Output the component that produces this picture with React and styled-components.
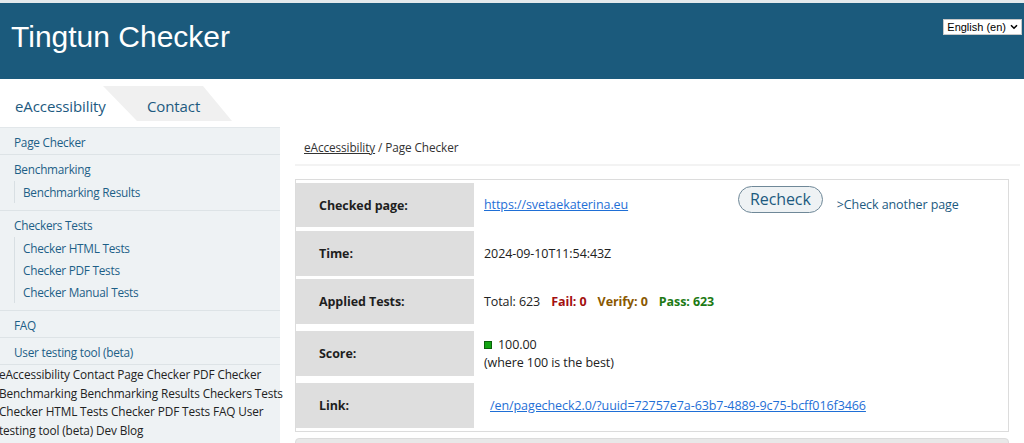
import React from "react";
import styled, { createGlobalStyle } from "styled-components";

const GlobalStyle = createGlobalStyle`
  body {
    margin: 0;
    background: #ffffff;
    font-family: "Open Sans", "Noto Sans", Arial, sans-serif;
    font-size: 12.5px;
    letter-spacing: -0.08px;
    color: #222222;
  }
`;

const Header = styled.header`
  display: flex;
  justify-content: space-between;
  align-items: flex-start;
  height: 76px;
  padding: 0 2px 0 11px;
  background: #1b5a7c;
  border-top: 3px solid #e3e9ec;
  letter-spacing: 0;
`;

const Title = styled.h1`
  margin: 19px 0 0;
  font: 400 30px/30px "Liberation Sans", Arial, sans-serif;
  color: #ffffff;
`;

const LangSelect = styled.div`
  display: inline-flex;
  align-items: center;
  gap: 4px;
  height: 16px;
  box-sizing: border-box;
  margin-top: 16px;
  padding: 0 3px;
  background: #ffffff;
  border: 1px solid #c8c8c8;
  font: 11px/14px "Liberation Sans", Arial, sans-serif;
  white-space: nowrap;
  color: #000000;
`;

const Tabs = styled.nav`
  display: flex;
  height: 35px;
  margin-top: 7px;
`;

const Tab = styled.a`
  display: flex;
  align-items: center;
  padding-top: 5px;
  box-sizing: border-box;
  font-size: 15px;
  letter-spacing: -0.1px;
  color: #1d5a7f;
  text-decoration: none;
  width: ${(p) => (p.$active ? "103px" : "129px")};
  padding-left: ${(p) => (p.$active ? "15px" : "44px")};
  background: ${(p) => (p.$active ? "#ffffff" : "#f0f0f0")};
  clip-path: ${(p) =>
    p.$active ? "none" : "polygon(0 0, 100px 0, 129px 100%, 34px 100%)"};
`;

const Columns = styled.div`
  display: grid;
  grid-template-columns: 280px 1fr;
  margin-top: 6px;
`;

const Sidebar = styled.aside`
  background: #eef2f4;
  border-top: 1px solid #e2e7ea;
  font-size: 11.8px;
  letter-spacing: -0.25px;
`;

const Group = styled.div`
  padding-bottom: ${(p) => (p.$nested ? "7px" : "0")};
  border-bottom: 1px solid #dde3e6;
`;

const NavLink = styled.a`
  display: block;
  padding: 5px 14px 3px;
  line-height: 18px;
  color: #1d5f87;
  text-decoration: none;
`;

const SubList = styled.div`
  margin-left: 14px;
  padding-left: 8px;
  border-left: 1px solid #d8dfe3;
`;

const SubLink = styled.a`
  display: block;
  padding: 2px 0;
  line-height: 18px;
  color: #1d5f87;
  text-decoration: none;
`;

const Flat = styled.p`
  margin: 0 -4px 0 -1px;
  line-height: 18.5px;
  letter-spacing: -0.12px;
  color: #222222;
`;

const Main = styled.main`
  padding: 0 4px 0 15px;
`;

const Crumbs = styled.div`
  margin-top: 11px;
  padding: 0 9px 8px;
  line-height: 18px;
  font-size: 11.8px;
  letter-spacing: -0.1px;
  color: #333333;
  border-bottom: 2px solid #f3f3f3;
`;

const CrumbLink = styled.a`
  color: #333333;
  text-decoration: underline;
`;

const Box = styled.section`
  margin: 13px 11px 0 0;
  padding: 3px 0;
  border: 1px solid #dcdcdc;
  background: #ffffff;
`;

const Row = styled.div`
  display: grid;
  grid-template-columns: 178px 1fr;
  height: ${(p) => p.$h}px;
  margin-top: ${(p) => p.$gap}px;
  &:first-child {
    margin-top: 0;
  }
`;

const Label = styled.div`
  display: flex;
  align-items: center;
  padding-left: 23px;
  background: #dedede;
  font-weight: 700;
  color: #1e1e1e;
`;

const Value = styled.div`
  display: flex;
  align-items: ${(p) => (p.$top ? "flex-start" : "center")};
  padding-left: ${(p) => p.$indent || 10}px;
  line-height: 18px;
  color: #222222;
`;

const UrlLink = styled.a`
  flex: ${(p) => (p.$fixed ? "0 0 254px" : "none")};
  align-self: center;
  color: #1f6fd6;
  text-decoration: underline;
`;

const RecheckButton = styled.button`
  margin-top: 3px;
  height: 27px;
  padding: 0 11px;
  border: 1px solid #6f8898;
  border-radius: 14px;
  background: #eef2f4;
  font-family: "Open Sans", "Noto Sans", Arial, sans-serif;
  font-size: 16px;
  letter-spacing: -0.1px;
  line-height: 25px;
  color: #1d5a7f;
`;

const AnotherLink = styled.a`
  margin-left: 14px;
  align-self: center;
  color: #1d5a7f;
  text-decoration: none;
`;

const Stat = styled.span`
  margin-right: 11px;
  font-weight: ${(p) => (p.$color ? 700 : 400)};
  color: ${(p) => p.$color || "#222222"};
`;

const ScoreLines = styled.div`
  display: flex;
  flex-direction: column;
`;

const ScoreLine = styled.div`
  display: flex;
  align-items: center;
  gap: 6px;
`;

const ScoreSquare = styled.span`
  width: 8px;
  height: 8px;
  background: #12a412;
  border: 1px solid #0a600a;
  box-sizing: border-box;
`;

const NextBox = styled.section`
  height: 20px;
  margin: 6px 11px 0 0;
  border: 1px solid #dcdcdc;
  border-radius: 4px 4px 0 0;
  background: #e8e8e8;
`;

const Chevron = () => (
  <svg width="8" height="6" viewBox="0 0 8 6" aria-hidden="true">
    <path d="M1 1.2l3 3 3-3" fill="none" stroke="#000" strokeWidth="1.6" />
  </svg>
);

const App = () => {
  return (
    <>
      <GlobalStyle />
      <Header>
        <Title>Tingtun Checker</Title>
        <LangSelect>
          English (en)
          <Chevron />
        </LangSelect>
      </Header>

      <Tabs>
        <Tab $active href="#">eAccessibility</Tab>
        <Tab href="#">Contact</Tab>
      </Tabs>

      <Columns>
        <Sidebar>
          <Group>
            <NavLink href="#">Page Checker</NavLink>
          </Group>
          <Group $nested>
            <NavLink href="#">Benchmarking</NavLink>
            <SubList>
              <SubLink href="#">Benchmarking Results</SubLink>
            </SubList>
          </Group>
          <Group $nested>
            <NavLink href="#">Checkers Tests</NavLink>
            <SubList>
              <SubLink href="#">Checker HTML Tests</SubLink>
              <SubLink href="#">Checker PDF Tests</SubLink>
              <SubLink href="#">Checker Manual Tests</SubLink>
            </SubList>
          </Group>
          <Group>
            <NavLink href="#">FAQ</NavLink>
          </Group>
          <Group>
            <NavLink href="#">User testing tool (beta)</NavLink>
          </Group>
          <Flat>
            eAccessibility Contact Page Checker PDF Checker Benchmarking
            Benchmarking Results Checkers Tests Checker HTML Tests Checker PDF
            Tests FAQ User testing tool (beta) Dev Blog
          </Flat>
        </Sidebar>

        <Main>
          <Crumbs>
            <CrumbLink href="#">eAccessibility</CrumbLink> / Page Checker
          </Crumbs>

          <Box>
            <Row $h={44} $gap={0}>
              <Label>Checked page:</Label>
              <Value $top>
                <UrlLink $fixed href="#">https://svetaekaterina.eu</UrlLink>
                <RecheckButton>Recheck</RecheckButton>
                <AnotherLink href="#">&gt;Check another page</AnotherLink>
              </Value>
            </Row>
            <Row $h={45} $gap={4}>
              <Label>Time:</Label>
              <Value>2024-09-10T11:54:43Z</Value>
            </Row>
            <Row $h={45} $gap={3}>
              <Label>Applied Tests:</Label>
              <Value>
                <Stat>Total: 623</Stat>
                <Stat $color="#a30f0f">Fail: 0</Stat>
                <Stat $color="#8a5800">Verify: 0</Stat>
                <Stat $color="#1c7a14">Pass: 623</Stat>
              </Value>
            </Row>
            <Row $h={45} $gap={7}>
              <Label>Score:</Label>
              <Value>
                <ScoreLines>
                  <ScoreLine>
                    <ScoreSquare />
                    100.00
                  </ScoreLine>
                  <span>(where 100 is the best)</span>
                </ScoreLines>
              </Value>
            </Row>
            <Row $h={45} $gap={7}>
              <Label>Link:</Label>
              <Value $indent={16}>
                <UrlLink href="#">
                  /en/pagecheck2.0/?uuid=72757e7a-63b7-4889-9c75-bcff016f3466
                </UrlLink>
              </Value>
            </Row>
          </Box>
          <NextBox />
        </Main>
      </Columns>
    </>
  );
};

export default App;
